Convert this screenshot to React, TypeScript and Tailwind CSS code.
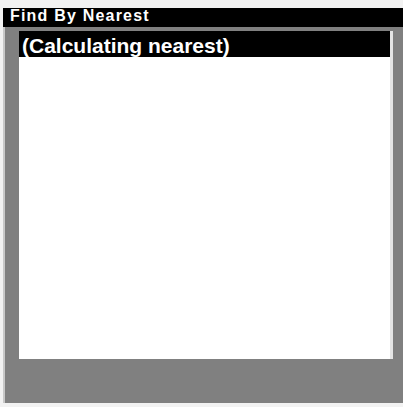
import React from "react";

export default function App() {
  return (
    <div
      className="w-[403px] h-[407px] bg-[#f2f2f2] pt-[8px] pl-[3px] pb-[4px] overflow-hidden"
      style={{ fontFamily: '"Liberation Sans", Arial, sans-serif' }}
    >
      <div className="flex flex-col h-full">
        <div className="h-[19px] bg-black text-white font-bold text-[16px] leading-[16px] pl-[7px] tracking-[1.2px] whitespace-nowrap">
          Find By Nearest
        </div>
        <div className="flex-1 bg-[#808080] border-l-[2px] border-[#c8c8c8] pt-[4px] pl-[14px] pr-[10px] pb-[44px]">
          <div className="h-full bg-white border-r-[3px] border-[#e4e4e4]">
            <div className="h-[26px] bg-black text-white font-bold text-[21px] leading-[22px] pt-[4px] pl-[3px] whitespace-nowrap">
              (Calculating nearest)
            </div>
          </div>
        </div>
      </div>
    </div>
  );
}
